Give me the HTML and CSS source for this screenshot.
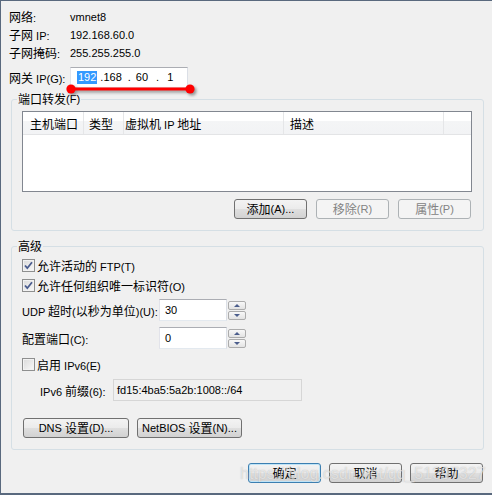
FILE: index.html
```html
<!DOCTYPE html>
<html lang="zh-CN">
<head>
    <meta charset="UTF-8">
    <meta name="viewport" content="width=device-width, initial-scale=1.0">
    <title>NAT 设置</title>
    <link rel="stylesheet" href="styles.css">
</head>
<body>
    <div class="window">
        <div class="info">
            <span><span class="zh">网络</span>:</span><span>vmnet8</span>
            <span><span class="zh">子网</span> IP:</span><span>192.168.60.0</span>
            <span><span class="zh">子网掩码</span>:</span><span>255.255.255.0</span>
        </div>
        <div class="gateway">
            <span class="gw-label"><span class="zh">网关</span> IP(G):</span>
            <div class="ip-box">
                <span class="sel">192</span><span>.</span><span>168</span><span>.</span><span>60</span><span>.</span><span>1</span>
            </div>
        </div>

        <fieldset class="group ports">
            <legend><span class="zh">端口转发</span>(F)</legend>
            <div class="list">
                <div class="list-head">
                    <span class="col c1"><span class="zh">主机端口</span></span>
                    <span class="col c2"><span class="zh">类型</span></span>
                    <span class="col c3"><span class="zh">虚拟机</span> IP <span class="zh">地址</span></span>
                    <span class="col c4"><span class="zh">描述</span></span>
                    <span class="col c5"></span>
                </div>
            </div>
            <div class="btn-row">
                <button class="btn"><span class="zh">添加</span>(A)...</button>
                <button class="btn disabled"><span class="zh">移除</span>(R)</button>
                <button class="btn disabled"><span class="zh">属性</span>(P)</button>
            </div>
        </fieldset>

        <fieldset class="group adv">
            <legend><span class="zh">高级</span></legend>
            <div class="check-row first">
                <span class="cb"><svg width="11" height="11" viewBox="0 0 11 11"><path d="M2 5.5 L4.3 8.2 L9 2.2" fill="none" stroke="#4a5c8e" stroke-width="1.8"/></svg></span>
                <span><span class="zh">允许活动的</span> FTP(T)</span>
            </div>
            <div class="check-row">
                <span class="cb"><svg width="11" height="11" viewBox="0 0 11 11"><path d="M2 5.5 L4.3 8.2 L9 2.2" fill="none" stroke="#4a5c8e" stroke-width="1.8"/></svg></span>
                <span><span class="zh">允许任何组织唯一标识符</span>(O)</span>
            </div>
            <div class="field-row udp">
                <span class="field-label">UDP <span class="zh">超时</span>(<span class="zh">以秒为单位</span>)(U):</span>
                <div class="spin">
                    <span class="spin-text">30</span>
                    <span class="spin-btns"><span class="sb up"></span><span class="sb down"></span></span>
                </div>
            </div>
            <div class="field-row port">
                <span class="field-label"><span class="zh">配置端口</span>(C):</span>
                <div class="spin">
                    <span class="spin-text">0</span>
                    <span class="spin-btns"><span class="sb up"></span><span class="sb down"></span></span>
                </div>
            </div>
            <div class="check-row ipv6">
                <span class="cb"></span>
                <span><span class="zh">启用</span> IPv6(E)</span>
            </div>
            <div class="field-row prefix">
                <span class="prefix-label">IPv6 <span class="zh">前缀</span>(6):</span>
                <span class="prefix-field">fd15:4ba5:5a2b:1008::/64</span>
            </div>
            <div class="extra-btns">
                <button class="btn dns">DNS <span class="zh">设置</span>(D)...</button>
                <button class="btn netbios">NetBIOS <span class="zh">设置</span>(N)...</button>
            </div>
        </fieldset>

        <div class="footer">
            <button class="btn default"><span class="zh">确定</span></button>
            <button class="btn"><span class="zh">取消</span></button>
            <button class="btn"><span class="zh">帮助</span></button>
        </div>

        <svg class="mark" width="140" height="20" viewBox="0 0 140 20">
            <defs>
                <filter id="blur" x="-20%" y="-100%" width="140%" height="300%">
                    <feGaussianBlur stdDeviation="1.5"/>
                </filter>
            </defs>
            <g filter="url(#blur)" opacity="0.55">
                <line x1="11" y1="11" x2="130" y2="11" stroke="#444" stroke-width="3"/>
                <circle cx="11" cy="11" r="4.5" fill="#444"/>
                <circle cx="130" cy="11" r="4.5" fill="#444"/>
            </g>
            <line x1="9" y1="9" x2="128" y2="9" stroke="#f00" stroke-width="3"/>
            <circle cx="9" cy="9" r="4.6" fill="#f00"/>
            <circle cx="128" cy="9" r="4.6" fill="#f00"/>
        </svg>
        <div class="watermark">https://blog.csdn.net/qq_51397327</div>
    </div>
</body>
</html>
```

FILE: styles.css
```css
body {
    margin: 0;
    background: #f0f0f0;
    font-family: "Liberation Sans", "Noto Sans CJK SC", sans-serif;
    font-size: 11px;
    color: #000;
}
.zh {
    font-family: "Noto Sans CJK SC", sans-serif;
    font-size: 12px;
}
.window {
    position: relative;
    width: 492px;
    height: 495px;
    box-sizing: border-box;
    background: #f0f0f0;
    border-top: 1px solid #59697e;
    border-left: 1px solid #59697e;
    border-bottom: 2px solid #59697e;
    padding-top: 7px;
    overflow: hidden;
    white-space: nowrap;
}
.info {
    display: grid;
    grid-template-columns: 61px auto;
    grid-auto-rows: 18px;
    line-height: 18px;
    padding-left: 8px;
}
.gateway {
    display: flex;
    align-items: center;
    height: 21px;
    margin-top: 5px;
    padding-left: 8px;
}
.gw-label {
    width: 61px;
}
.ip-box {
    display: flex;
    align-items: center;
    width: 118px;
    height: 21px;
    box-sizing: border-box;
    padding-left: 6px;
    background: #fff;
    border: 1px solid #abadb3;
    border-color: #abadb3 #dbdfe6 #e3e9ef #e2e3ea;
    line-height: 13px;
}
.ip-box .sel {
    background: #3399ff;
    color: #fff;
    padding: 0 1px;
}
.ip-box span:nth-child(2) { margin-left: 3px; }
.ip-box span:nth-child(4) { margin-left: 6px; }
.ip-box span:nth-child(5) { margin-left: 5px; }
.ip-box span:nth-child(6) { margin-left: 8px; }
.ip-box span:nth-child(7) { margin-left: 8px; }

.group {
    margin: 3px 8px 0 10px;
    padding: 0 10px 11px;
    border: 1px solid #d5dfe5;
    border-radius: 3px;
    min-width: 0;
}
.group legend {
    display: flex;
    align-items: center;
    height: 16px;
    padding: 0 1px;
    margin-left: -5px;
    line-height: 16px;
}
.adv {
    margin-top: 7px;
}
.list {
    margin-top: 4px;
    width: 450px;
    height: 81px;
    box-sizing: border-box;
    border: 1px solid #828790;
    background: #fff;
}
.list-head {
    display: flex;
    height: 22px;
    line-height: 24px;
    background: linear-gradient(#fff 0%, #fff 42%, #f4f5f6 42%, #f2f3f5 100%);
    border-bottom: 1px solid #e3e4e6;
}
.col {
    box-sizing: border-box;
    border-right: 1px solid #e5e6e8;
    overflow: hidden;
}
.c1 { width: 61px; padding-left: 7px; }
.c2 { width: 40px; padding-left: 5px; }
.c3 { width: 160px; padding-left: 1px; }
.c4 { width: 160px; padding-left: 6px; }
.c5 { flex: 1; border-right: none; }

.btn {
    display: flex;
    align-items: center;
    justify-content: center;
    width: 73px;
    height: 20px;
    box-sizing: border-box;
    padding: 0;
    border: 1px solid #707070;
    border-radius: 3px;
    background: linear-gradient(#f3f3f3 0%, #ebebeb 50%, #dfdfdf 51%, #d2d2d2 100%);
    font: inherit;
    line-height: 18px;
    color: #000;
    white-space: pre;
}
.btn.disabled {
    border-color: #adb2b5;
    background: #f4f4f4;
    color: #838383;
}
.btn.default {
    border-color: #3c7fb1;
    box-shadow: inset 0 0 0 1px #bfe4f7;
}
.btn-row {
    display: flex;
    justify-content: flex-end;
    gap: 9px;
    margin-top: 7px;
    padding-right: 2px;
}

.check-row {
    display: flex;
    align-items: center;
    gap: 2px;
    height: 20px;
}
.check-row.first {
    margin-top: 1px;
}
.check-row.ipv6 {
    margin-top: 5px;
}
.cb {
    display: flex;
    align-items: center;
    justify-content: center;
    width: 13px;
    height: 13px;
    box-sizing: border-box;
    border: 1px solid #8e8f8f;
    background: linear-gradient(135deg, #dadada, #f9f9f9);
    box-shadow: inset 0 0 0 1px #f2f2f2;
}
.field-row {
    display: flex;
    align-items: center;
    height: 22px;
}
.field-row.udp { margin-top: 4px; }
.field-row.port { margin-top: 6px; }
.field-row.prefix {
    margin-top: 5px;
    padding-left: 18px;
}
.field-label {
    width: 137px;
}
.spin {
    display: flex;
    align-items: center;
    gap: 1px;
}
.spin-text {
    width: 68px;
    height: 22px;
    box-sizing: border-box;
    padding-left: 5px;
    line-height: 20px;
    background: #fff;
    border: 1px solid #abadb3;
    border-color: #abadb3 #dbdfe6 #e3e9ef #e2e3ea;
}
.spin-btns {
    display: flex;
    flex-direction: column;
    gap: 1px;
}
.sb {
    display: flex;
    align-items: center;
    justify-content: center;
    width: 18px;
    height: 9px;
    box-sizing: border-box;
    border: 1px solid #acacac;
    border-radius: 2px;
    background: linear-gradient(#f8f8f8, #e3e3e3);
}
.sb::after {
    content: "";
    border-left: 3px solid transparent;
    border-right: 3px solid transparent;
}
.sb.up::after {
    border-bottom: 3px solid #4c5e8c;
}
.sb.down::after {
    border-top: 3px solid #4c5e8c;
}
.prefix-label {
    width: 73px;
}
.prefix-field {
    width: 189px;
    height: 22px;
    box-sizing: border-box;
    padding-left: 3px;
    line-height: 20px;
    background: #f0f0f0;
    border: 1px solid #d6d6d6;
}
.extra-btns {
    display: flex;
    gap: 8px;
    margin-top: 17px;
    padding-left: 1px;
}
.btn.dns { width: 106px; }
.btn.netbios { width: 105px; }

.footer {
    display: flex;
    justify-content: flex-end;
    gap: 8px;
    margin: 13px 9px 0 0;
}

.mark {
    position: absolute;
    left: 61px;
    top: 79px;
}
.watermark {
    position: absolute;
    left: 239px;
    top: 464px;
    font-family: "Liberation Sans", sans-serif;
    font-size: 16px;
    line-height: 18px;
    color: rgba(255, 255, 255, 0.6);
    text-shadow: 0 0 1px rgba(110, 110, 110, 0.45);
    pointer-events: none;
}
```
